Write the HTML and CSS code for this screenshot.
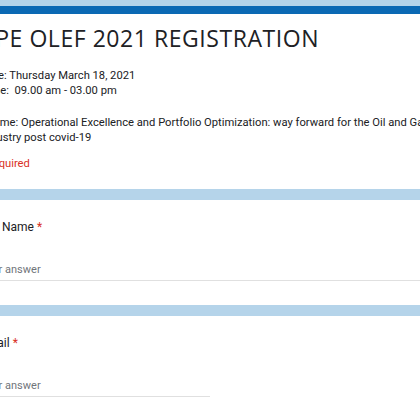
FILE: index.html
```html
<!DOCTYPE html>
<html lang="en">
<head>
<meta charset="utf-8">
<title>SPE OLEF 2021 REGISTRATION</title>
<link rel="stylesheet" href="styles.css">
</head>
<body>
<div class="viewport">
  <div class="form">
    <section class="card header-card">
      <h1 class="title">SPE OLEF 2021 REGISTRATION</h1>
      <div class="desc">
        <p>Date: Thursday March 18, 2021<br>Time:&nbsp; 09.00 am - 03.00 pm</p>
        <p>Theme: Operational Excellence and Portfolio Optimization: way forward for the Oil and Gas<br>Industry post covid-19</p>
      </div>
      <div class="required">*Required</div>
    </section>
    <section class="card question">
      <div class="label">Full Name <span class="star">*</span></div>
      <div class="answer full">Your answer</div>
    </section>
    <section class="card question">
      <div class="label">Email <span class="star">*</span></div>
      <div class="answer half">Your answer</div>
    </section>
  </div>
</div>
</body>
</html>
```

FILE: styles.css
```css
html, body {
  margin: 0;
  padding: 0;
}
body {
  background: #b5d4ea;
  font-family: Roboto, "Liberation Sans", sans-serif;
  color: #202124;
}
.viewport {
  width: 420px;
  height: 420px;
  overflow: hidden;
}
.form {
  margin-left: -44px;
  width: 620px;
  padding-top: 6px;
  display: flex;
  flex-direction: column;
  gap: 11px;
}
.card {
  background: #fff;
}
.header-card {
  border-top: 8px solid #0b69b4;
  padding-top: 10px;
  padding-bottom: 18px;
}
.title {
  margin: 0;
  padding-left: 26px;
  font-family: "Open Sans", sans-serif;
  font-weight: 400;
  font-size: 23px;
  line-height: 28px;
  letter-spacing: 0.55px;
  white-space: nowrap;
}
.desc {
  margin-top: 16px;
  padding-left: 25px;
  font-size: 11.2px;
  line-height: 15px;
  white-space: nowrap;
}
.desc p {
  margin: 0 0 17px 0;
}
.desc p:last-child {
  margin-bottom: 0;
}
.required {
  margin-top: 11px;
  padding-left: 25px;
  font-size: 11.2px;
  line-height: 15px;
  color: #d93025;
}
.question {
  padding: 18px 0 24px 24px;
}
.label {
  font-size: 12px;
  line-height: 18px;
}
.star {
  color: #d93025;
}
.answer {
  margin-top: 25px;
  font-size: 11px;
  line-height: 18px;
  padding-bottom: 1px;
  color: #70757a;
  border-bottom: 1px solid #e0e0e0;
}
.answer.full {
  width: 560px;
}
.answer.half {
  width: 230px;
}
```
